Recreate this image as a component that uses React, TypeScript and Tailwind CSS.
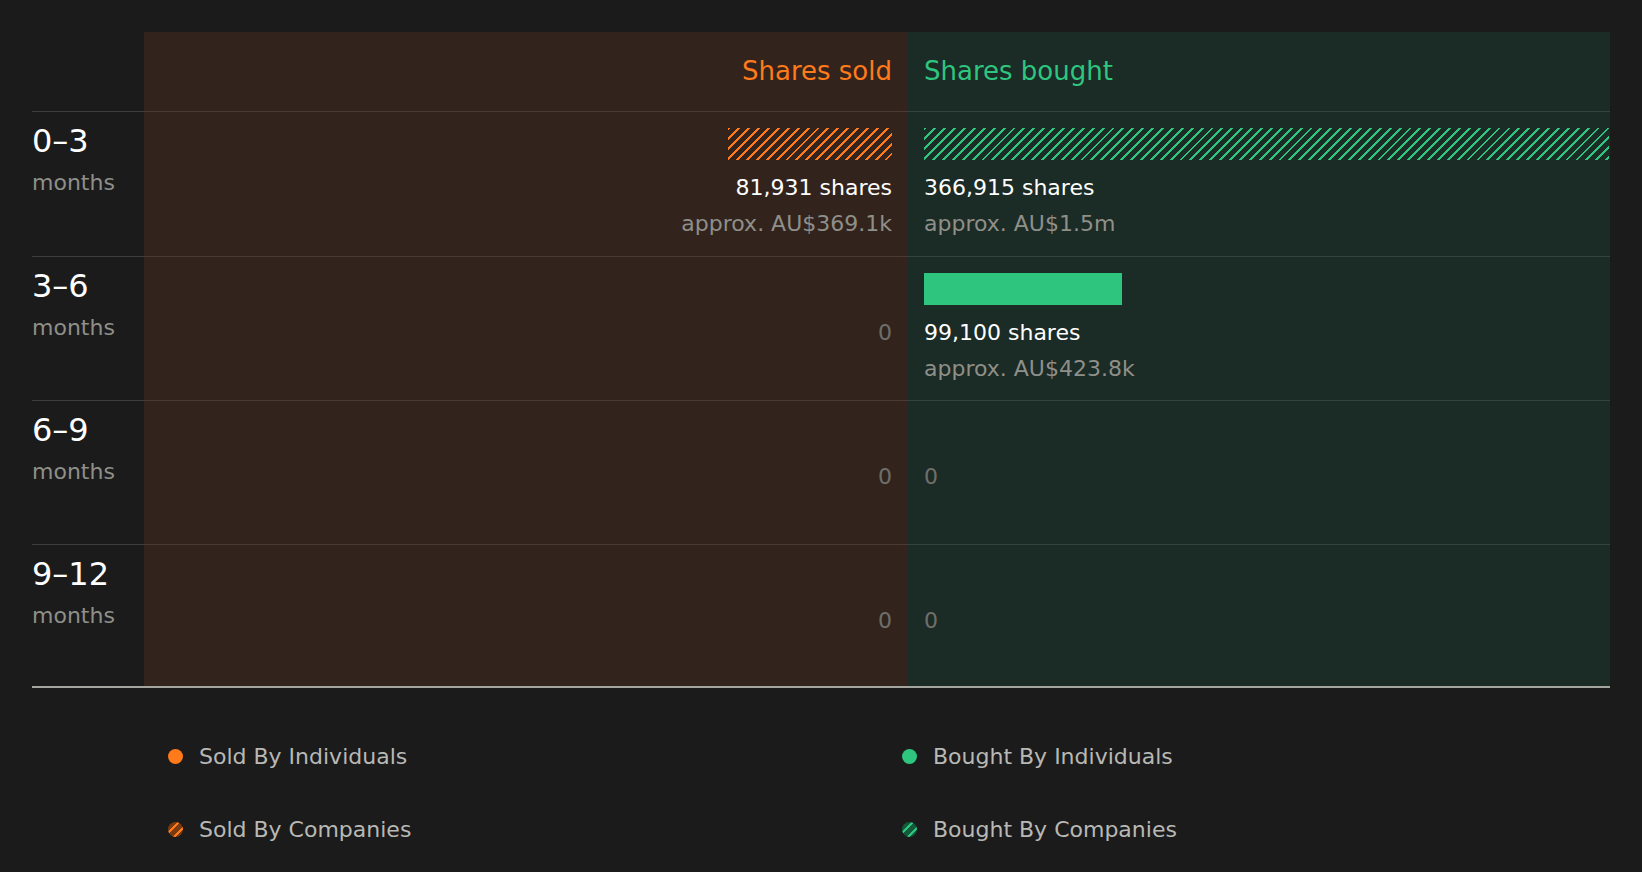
const font = { fontFamily: '"DejaVu Sans", sans-serif' };

type Row = {
  label: string;
  sold?: { width: number; shares: string; value: string; hatched: boolean };
  bought?: { width: number; shares: string; value: string; hatched: boolean };
};

const rows: Row[] = [
  {
    label: "0–3",
    sold: { width: 164, shares: "81,931 shares", value: "approx. AU$369.1k", hatched: true },
    bought: { width: 685, shares: "366,915 shares", value: "approx. AU$1.5m", hatched: true },
  },
  {
    label: "3–6",
    bought: { width: 198, shares: "99,100 shares", value: "approx. AU$423.8k", hatched: false },
  },
  { label: "6–9" },
  { label: "9–12" },
];

const orangeHatch =
  "bg-[repeating-linear-gradient(135deg,#ff7a1a_0px,#ff7a1a_2px,transparent_2px,transparent_7px)]";
const greenHatch =
  "bg-[repeating-linear-gradient(135deg,#2ec57f_0px,#2ec57f_2px,transparent_2px,transparent_7px)]";

function Cell({ data, side }: { data?: Row["sold"]; side: "sold" | "bought" }) {
  const right = side === "sold";
  return (
    <div
      className={`flex flex-col pt-4 ${right ? "items-end pr-4 bg-[#32241c]" : "items-start pl-4 bg-[#1b2b25]"}`}
    >
      {data ? (
        <>
          <div
            className={`h-8 ${data.hatched ? (right ? orangeHatch : greenHatch) : right ? "bg-[#ff7a1a]" : "bg-[#2ec57f]"}`}
            style={{ width: data.width }}
          />
          <div className="mt-[13px] text-[22px] leading-[30px] text-white">{data.shares}</div>
          <div className="mt-[6px] text-[22px] leading-[30px] text-[#8f8f8a]">{data.value}</div>
        </>
      ) : (
        <div className="mt-[45px] text-[22px] leading-[30px] text-[#6f6f6a]">0</div>
      )}
    </div>
  );
}

function Legend({ color, label, hatched }: { color: string; label: string; hatched?: boolean }) {
  return (
    <div className="flex items-center gap-[16px] h-8">
      <span
        className={`w-[15px] h-[15px] rounded-full ${hatched ? (color === "o" ? orangeHatch + " bg-[#7a3a10]" : greenHatch + " bg-[#135a3a]") : color === "o" ? "bg-[#ff7a1a]" : "bg-[#2ec57f]"}`}
      />
      <span className="text-[22px] text-[#b8b8b5]">{label}</span>
    </div>
  );
}

export default function App() {
  return (
    <div className="w-[1642px] h-[872px] bg-[#1b1b1b] px-8 pt-8" style={font}>
      <div className="grid grid-cols-[112px_764px_702px]">
        <div className="h-20 border-b border-[#3d3d3a]" />
        <div className="h-20 bg-[#32241c] flex items-center justify-end pr-4 text-[26px] text-[#ff7a1a] border-b border-[#4a3a30]">
          Shares sold
        </div>
        <div className="h-20 bg-[#1b2b25] flex items-center pl-4 text-[26px] text-[#2ec57f] border-b border-[#34433d]">
          Shares bought
        </div>
        {rows.map((r, i) => (
          <div key={r.label} className={`contents`}>
            <div
              className={`h-[144px] pt-[9px] ${i > 0 ? "border-t border-[#3d3d3a]" : ""} ${i === rows.length - 1 ? "border-b-2 border-b-[#a5a5a0]" : ""}`}
            >
              <div className="text-[32px] leading-[40px] text-white">{r.label}</div>
              <div className="mt-[7px] text-[22px] leading-[30px] text-[#8f8f8a]">months</div>
            </div>
            <div
              className={`h-[144px] grid ${i > 0 ? "border-t border-[#4a3a30]" : ""} ${i === rows.length - 1 ? "border-b-2 border-b-[#a5a5a0]" : ""}`}
            >
              <Cell data={r.sold} side="sold" />
            </div>
            <div
              className={`h-[144px] grid ${i > 0 ? "border-t border-[#34433d]" : ""} ${i === rows.length - 1 ? "border-b-2 border-b-[#a5a5a0]" : ""}`}
            >
              <Cell data={r.bought} side="bought" />
            </div>
          </div>
        ))}
      </div>
      <div className="grid grid-cols-[734px_1fr] pl-[136px] mt-[52px] gap-y-[41px]">
        <Legend color="o" label="Sold By Individuals" />
        <Legend color="g" label="Bought By Individuals" />
        <Legend color="o" label="Sold By Companies" hatched />
        <Legend color="g" label="Bought By Companies" hatched />
      </div>
    </div>
  );
}
